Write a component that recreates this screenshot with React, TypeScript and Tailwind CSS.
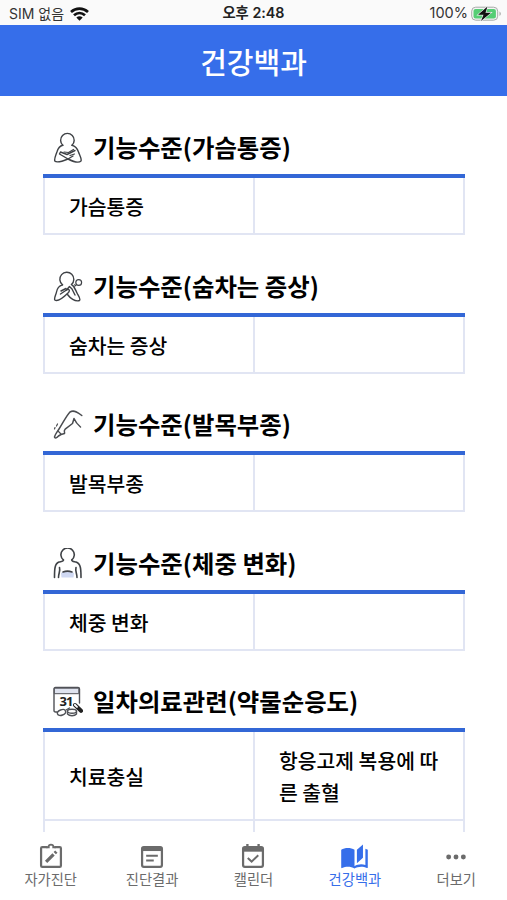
import type { ReactNode } from "react";

const ChestIcon = () => (
    <svg width="30" height="31" viewBox="0 0 30 31" fill="none" stroke="#3f4246" strokeWidth="1.4" strokeLinecap="round" strokeLinejoin="round">
        <path d="M9.800 13.200A6.800 6.800 0 1 1 19 13.200" />
        <path d="M9.800 13.200C6 14 4.800 17 3.900 20C2.500 24 1 27 1.800 29C3.500 31 9 29.500 15 27L20 24" />
        <path d="M19 13.200C22.500 14 24.500 17 25.500 20C26.500 23 29 27 28 29C26 31 20 29.500 15 27L6.500 22L7.500 20L14 22.500L22 18.500" />
        <path d="M11 20L15.500 20.500L20.500 17.500M17 23.500L21.500 22" strokeWidth="1.200" />
    </svg>
)

const BreathIcon = () => (
    <svg width="30" height="31" viewBox="0 0 30 31" fill="none" stroke="#3f4246" strokeWidth="1.400" strokeLinecap="round" strokeLinejoin="round">
        <path d="M9.500 13.800A7 7 0 1 1 18.500 13.500" />
        <path d="M9.500 13.800C5.500 15 4 18 3.500 21C3 24 .800 27 1.800 29C5 31 10 27 15.500 21.500C17.500 19 15.500 17.500 13.500 19L7.500 23" />
        <path d="M18.500 13.500C22 16 22.500 19 24 22C25.500 25 28 28 26.500 29.500C22 31 17 27 14.500 23.500M13.500 19L16.500 15.500L19 18L22 24M8 20L13 17.500" />
        <circle cx="25.700" cy="11.500" r="2.900" strokeWidth="1.200" />
        <circle cx="21.800" cy="14.500" r=".900" strokeWidth="1" />
    </svg>
)

const AnkleIcon = () => (
    <svg width="30" height="31" viewBox="0 0 30 31" fill="none" stroke="#4a4c50" strokeWidth="1.500" strokeLinecap="round" strokeLinejoin="round">
        <path d="M28.800 6.500C25 3.500 21 .500 17 3C13.500 6.500 10 14 6 20C4 23 2 25.500 1.500 28C2 29.800 4 28.800 5.500 27L8 25.500L11.500 24.500C12 22 10 22.500 12.500 19.800L19.500 14.500L21 9.500C22.500 13 24.500 15.500 27.500 18" />
        <path d="M5 22L8 25M2 18.500L1.500 20M4.500 15L3.500 17" strokeWidth="1.200" />
    </svg>
)

const WeightIcon = () => (
    <svg width="30" height="31" viewBox="0 0 30 31" fill="none" stroke="#3f4246" strokeWidth="1.600" strokeLinecap="round" strokeLinejoin="round">
        <path d="M8 25C12 22.500 17 22.500 21 25L20.500 29.500H8.500Z" fill="#d0d9f3" stroke="none" />
        <path d="M1.500 29.500C1.500 22 1.500 15.500 6 14C9 13.400 10.500 13.500 10.500 12A6.700 6.700 0 1 1 18.700 12C18.700 13.500 20 13.400 23 14C28 15.500 28 22 28 29.500" />
        <path d="M6.500 19.500C7.500 23 5.500 25.500 5.500 29.500M23 19.500C22 23 24 25.500 24 29.500" />
        <path d="M10 24C12.500 23 16.500 23 19 24" />
    </svg>
)

const PillIcon = () => (
    <svg width="30" height="31" viewBox="0 0 30 31" fill="none" stroke="#505257" strokeWidth="1.400" strokeLinecap="round" strokeLinejoin="round">
        <path d="M4 26H2.500C1.500 26 1 25.500 1 24.500V3C1 2 1.500 1.500 2.500 1.500H25C26 1.500 26.500 2 26.500 3V17" />
        <path d="M1.700 2.200H25.800V7.700H1.700Z" fill="#dfe3ef" strokeWidth="1" />
        <text x="6.500" y="20" fontSize="13" fontWeight="700" fill="#222" stroke="none" textLength="14" className="font-['Noto_Sans']">31</text>
        <ellipse cx="8.500" cy="26.500" rx="4.300" ry="2.700" transform="rotate(-22 8.500 26.500)" fill="white" />
        <path d="M14.500 25.500V28C16.500 30.300 21.500 30.300 23.500 28V25.500" fill="white" />
        <ellipse cx="19" cy="25.300" rx="4.500" ry="2" fill="white" />
        <path d="M13 24L16.500 22" />
        <path d="M22 19L28 24.800" stroke="#222" strokeWidth="4" />
        <path d="M21.800 18.800L24 20.900" stroke="white" strokeWidth="1.900" />
    </svg>
)

const sections: { title: string; icon: ReactNode; rows: string[][] }[] = [
    { title: "기능수준(가슴통증)", icon: <ChestIcon />, rows: [["가슴통증", ""]] },
    { title: "기능수준(숨차는 증상)", icon: <BreathIcon />, rows: [["숨차는 증상", ""]] },
    { title: "기능수준(발목부종)", icon: <AnkleIcon />, rows: [["발목부종", ""]] },
    { title: "기능수준(체중 변화)", icon: <WeightIcon />, rows: [["체중 변화", ""]] },
    { title: "일차의료관련(약물순응도)", icon: <PillIcon />, rows: [["치료충실", "항응고제 복용에 따른 출혈"], ["", ""]] },
]

const tabs = [
    {
        label: "자가진단",
        icon: (
            <svg width="28" height="28" viewBox="0 0 24 24" fill="none" stroke="currentColor" strokeWidth="1.900">
                <path d="M9 4.300H4.500Q3.500 4.300 3.500 5.300V20.300Q3.500 21.300 4.500 21.300H19.500Q20.500 21.300 20.500 20.300V5.300Q20.500 4.300 19.500 4.300H15" />
                <path d="M8 4.500H10C9.500 1.500 14.500 1.500 14 4.500H16" strokeWidth="1.600" />
                <path d="M7.800 17L14.200 10.600M15.200 9.600L16.600 8.200" strokeWidth="2.800" />
            </svg>
        ),
    },
    {
        label: "진단결과",
        icon: (
            <svg width="28" height="28" viewBox="0 0 24 24" fill="none" stroke="currentColor" strokeWidth="1.900">
                <rect x="3.500" y="4.300" width="17" height="17" rx="1.500" />
                <path d="M3.500 6H20.500" strokeWidth="3.500" />
                <path d="M7 11.800H17M7 15.800H13.500" strokeWidth="1.800" />
            </svg>
        ),
    },
    {
        label: "캘린더",
        icon: (
            <svg width="28" height="28" viewBox="0 0 24 24" fill="none" stroke="currentColor" strokeWidth="1.900">
                <rect x="3.500" y="4.300" width="17" height="17" rx="1.500" />
                <path d="M3.500 6.300H20.500" strokeWidth="4" />
                <path d="M7.200 1.800V5M16.800 1.800V5" strokeWidth="2" />
                <path d="M7.500 13.800L10.800 16.800L16.500 11.300" strokeWidth="1.700" />
            </svg>
        ),
    },
    {
        label: "건강백과",
        active: true,
        icon: (
            <svg width="29" height="29" viewBox="0 0 24 24" fill="currentColor">
                <path d="M19 2L14 6.500V17.500L19 13V2M6.500 5C4.550 5 2.450 5.400 1 6.500V21.160C1 21.410 1.250 21.660 1.500 21.660C1.600 21.660 1.650 21.590 1.750 21.590C3.100 20.940 5.050 20.500 6.500 20.500C8.450 20.500 10.550 20.900 12 22C13.350 21.150 15.800 20.500 17.500 20.500C19.150 20.500 20.850 20.810 22.250 21.560C22.350 21.610 22.400 21.590 22.500 21.590C22.750 21.590 23 21.340 23 21.090V6.500C22.400 6.050 21.750 5.750 21 5.500V19C19.900 18.650 18.700 18.500 17.500 18.500C15.800 18.500 13.350 19.150 12 20V6.500C10.550 5.400 8.450 5 6.500 5Z" />
            </svg>
        ),
    },
    {
        label: "더보기",
        icon: (
            <svg width="28" height="28" viewBox="0 0 24 24" fill="currentColor">
                <circle cx="5.700" cy="12.800" r="2.100" />
                <circle cx="12" cy="12.800" r="2.100" />
                <circle cx="18.300" cy="12.800" r="2.100" />
            </svg>
        ),
    },
]

const StatusBar = () => (
    <div className="flex h-[25px] shrink-0 items-center bg-[#fafafa] pt-0.5 pr-[5px] pl-[9px] text-sm leading-none text-[#333]">
        <div className="flex flex-1 items-center gap-1.5">
            <span>SIM 없음</span>
            <svg width="19" height="14" viewBox="0 0 19 14" fill="none" stroke="#111" strokeWidth="2.700">
                <path d="M1 5C6 .500 13 .500 18 5M4 8.300C7.300 5.300 11.700 5.300 15 8.300" />
                <path d="M6.300 10.500Q9.500 8 12.700 10.500L9.500 13.700Z" fill="#111" stroke="none" />
            </svg>
        </div>
        <span className="pr-1 text-[14.300px] font-semibold text-[#222]">오후 2:48</span>
        <div className="flex flex-1 items-center justify-end gap-[3px]">
            <span className="text-[14.500px]">100%</span>
            <svg width="31" height="16" viewBox="0 0 31 16">
                <rect x=".700" y="1.200" width="26" height="13" rx="4" fill="#f5f5f5" stroke="#a6aaa7" />
                <rect x="2.500" y="3" width="22.400" height="9.400" rx="2" fill="#55ce75" />
                <path d="M28.500 5.500V10C30.300 9.200 30.300 6.300 28.500 5.500" fill="#a6aaa7" />
                <path d="M16.500 .500L7 8.800H12.500L10 15L20 6.700H14.500Z" fill="#111" stroke="#f5f5f5" strokeWidth="1.200" paintOrder="stroke" />
            </svg>
        </div>
    </div>
)

export default function App() {
    return (
        <div className="flex h-[900px] w-full flex-col overflow-hidden bg-white font-['Inter','Noto_Sans_CJK_KR',sans-serif]">
            <StatusBar />
            <header className="flex h-[71px] shrink-0 items-center justify-center bg-[#366eea]">
                <h1 className="pt-0.5 text-[29px] leading-none font-medium text-white font-['Noto_Sans_CJK_KR',sans-serif]">건강백과</h1>
            </header>
            <main className="min-h-0 flex-1 overflow-hidden pt-px pr-[42px] pl-[43px] font-['Noto_Sans_CJK_KR',sans-serif] text-black">
                {sections.map((section) => (
                    <section key={section.title}>
                        <div className="flex h-[77.400px] items-end gap-2.5 pb-[11px] pl-2.5">
                            {section.icon}
                            <h2 className="text-[24.400px] leading-8 font-bold whitespace-nowrap">{section.title}</h2>
                        </div>
                        <div className="border-t-4 border-[#3367d6]">
                            {section.rows.map((row, i) => (
                                <div key={i} className="grid grid-cols-2 border-r-2 border-b-2 border-[#e1e5f3]">
                                    {row.map((cell, j) => (
                                        <div key={j} className="flex min-h-[55px] items-center border-l-2 border-[#e1e5f3] pt-3 pr-5 pb-[11px] pl-6 text-[20.400px] leading-8 font-medium break-all">
                                            {cell}
                                        </div>
                                    ))}
                                </div>
                            ))}
                        </div>
                    </section>
                ))}
            </main>
            <nav className="grid h-[68px] shrink-0 grid-cols-5 bg-white pt-2.5 font-['Noto_Sans_CJK_KR',sans-serif]">
                {tabs.map((tab) => (
                    <div key={tab.label} className={tab.active ? "flex flex-col items-center text-[#366eea]" : "flex flex-col items-center text-[#6b6b6b]"}>
                        <div className="flex h-7 items-center">{tab.icon}</div>
                        <span className="text-[14.300px] leading-[17px]">{tab.label}</span>
                    </div>
                ))}
            </nav>
        </div>
    )
}
